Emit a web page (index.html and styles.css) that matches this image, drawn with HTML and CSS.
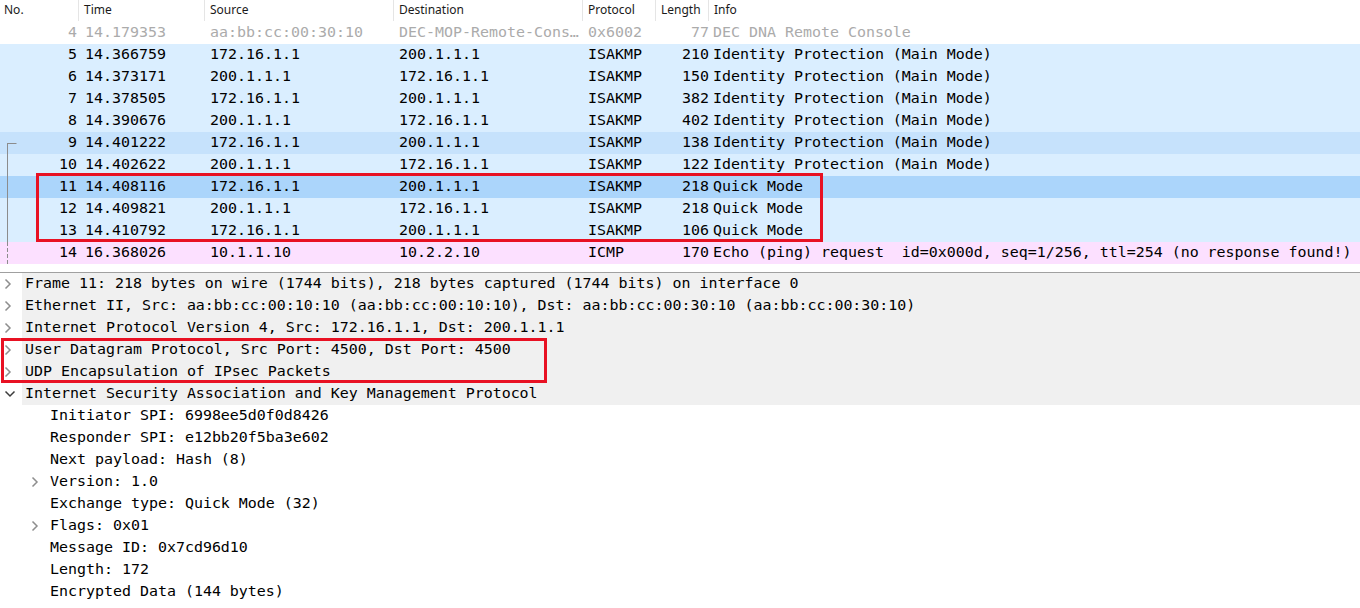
FILE: index.html
```html
<!DOCTYPE html>
<html>
<head>
<meta charset="utf-8">
<link rel="stylesheet" href="styles.css">
</head>
<body>
<div class="app">
  <section class="plist">
    <div class="row head">
      <div class="c no">No.</div>
      <div class="c">Time</div>
      <div class="c">Source</div>
      <div class="c">Destination</div>
      <div class="c">Protocol</div>
      <div class="c">Length</div>
      <div class="c last">Info</div>
    </div>
    <div class="row pk dim"><div class="c num">4</div><div class="c">14.179353</div><div class="c">aa:bb:cc:00:30:10</div><div class="c">DEC-MOP-Remote-Cons…</div><div class="c">0x6002</div><div class="c num">77</div><div class="c">DEC DNA Remote Console</div></div>
    <div class="row pk udp"><div class="c num">5</div><div class="c">14.366759</div><div class="c">172.16.1.1</div><div class="c">200.1.1.1</div><div class="c">ISAKMP</div><div class="c num">210</div><div class="c">Identity Protection (Main Mode)</div></div>
    <div class="row pk udp"><div class="c num">6</div><div class="c">14.373171</div><div class="c">200.1.1.1</div><div class="c">172.16.1.1</div><div class="c">ISAKMP</div><div class="c num">150</div><div class="c">Identity Protection (Main Mode)</div></div>
    <div class="row pk udp"><div class="c num">7</div><div class="c">14.378505</div><div class="c">172.16.1.1</div><div class="c">200.1.1.1</div><div class="c">ISAKMP</div><div class="c num">382</div><div class="c">Identity Protection (Main Mode)</div></div>
    <div class="row pk udp"><div class="c num">8</div><div class="c">14.390676</div><div class="c">200.1.1.1</div><div class="c">172.16.1.1</div><div class="c">ISAKMP</div><div class="c num">402</div><div class="c">Identity Protection (Main Mode)</div></div>
    <div class="row pk rel"><div class="c num">9</div><div class="c">14.401222</div><div class="c">172.16.1.1</div><div class="c">200.1.1.1</div><div class="c">ISAKMP</div><div class="c num">138</div><div class="c">Identity Protection (Main Mode)</div></div>
    <div class="row pk udp"><div class="c num">10</div><div class="c">14.402622</div><div class="c">200.1.1.1</div><div class="c">172.16.1.1</div><div class="c">ISAKMP</div><div class="c num">122</div><div class="c">Identity Protection (Main Mode)</div></div>
    <div class="row pk sel"><div class="c num">11</div><div class="c">14.408116</div><div class="c">172.16.1.1</div><div class="c">200.1.1.1</div><div class="c">ISAKMP</div><div class="c num">218</div><div class="c">Quick Mode</div></div>
    <div class="row pk udp"><div class="c num">12</div><div class="c">14.409821</div><div class="c">200.1.1.1</div><div class="c">172.16.1.1</div><div class="c">ISAKMP</div><div class="c num">218</div><div class="c">Quick Mode</div></div>
    <div class="row pk udp"><div class="c num">13</div><div class="c">14.410792</div><div class="c">172.16.1.1</div><div class="c">200.1.1.1</div><div class="c">ISAKMP</div><div class="c num">106</div><div class="c">Quick Mode</div></div>
    <div class="row pk icmp"><div class="c num">14</div><div class="c">16.368026</div><div class="c">10.1.1.10</div><div class="c">10.2.2.10</div><div class="c">ICMP</div><div class="c num">170</div><div class="c">Echo (ping) request  id=0x000d, seq=1/256, ttl=254 (no response found!)</div></div>
    <svg class="conv" width="12" height="124" viewBox="0 0 12 124">
      <path d="M7.5 0.5 H16.5" stroke="#8c8c8c" stroke-width="1" fill="none"/>
      <path d="M7.5 0 V99" stroke="#8c8c8c" stroke-width="1" fill="none"/>
      <path d="M7.5 99 V121" stroke="#8c8c8c" stroke-width="1" stroke-dasharray="4 2" fill="none"/>
    </svg>
    <div class="mark mark-list"></div>
  </section>
  <section class="details">
    <div class="dl top"><span class="tw"><svg width="8" height="12" viewBox="0 0 8 12"><path d="M1.5 1.5 L6 6 L1.5 10.5" stroke="#8e8e8e" stroke-width="1.5" fill="none"/></svg></span><span class="tx">Frame 11: 218 bytes on wire (1744 bits), 218 bytes captured (1744 bits) on interface 0</span></div>
    <div class="dl top"><span class="tw"><svg width="8" height="12" viewBox="0 0 8 12"><path d="M1.5 1.5 L6 6 L1.5 10.5" stroke="#8e8e8e" stroke-width="1.5" fill="none"/></svg></span><span class="tx">Ethernet II, Src: aa:bb:cc:00:10:10 (aa:bb:cc:00:10:10), Dst: aa:bb:cc:00:30:10 (aa:bb:cc:00:30:10)</span></div>
    <div class="dl top"><span class="tw"><svg width="8" height="12" viewBox="0 0 8 12"><path d="M1.5 1.5 L6 6 L1.5 10.5" stroke="#8e8e8e" stroke-width="1.5" fill="none"/></svg></span><span class="tx">Internet Protocol Version 4, Src: 172.16.1.1, Dst: 200.1.1.1</span></div>
    <div class="dl top"><span class="tw"><svg width="8" height="12" viewBox="0 0 8 12"><path d="M1.5 1.5 L6 6 L1.5 10.5" stroke="#8e8e8e" stroke-width="1.5" fill="none"/></svg></span><span class="tx">User Datagram Protocol, Src Port: 4500, Dst Port: 4500</span></div>
    <div class="dl top"><span class="tw"><svg width="8" height="12" viewBox="0 0 8 12"><path d="M1.5 1.5 L6 6 L1.5 10.5" stroke="#8e8e8e" stroke-width="1.5" fill="none"/></svg></span><span class="tx">UDP Encapsulation of IPsec Packets</span></div>
    <div class="dl top"><span class="tw"><svg width="12" height="8" viewBox="0 0 12 8"><path d="M1.5 1.5 L6 6 L10.5 1.5" stroke="#3c3c3c" stroke-width="1.5" fill="none"/></svg></span><span class="tx">Internet Security Association and Key Management Protocol</span></div>
    <div class="dl sub"><span class="tw"></span><span class="tx">Initiator SPI: 6998ee5d0f0d8426</span></div>
    <div class="dl sub"><span class="tw"></span><span class="tx">Responder SPI: e12bb20f5ba3e602</span></div>
    <div class="dl sub"><span class="tw"></span><span class="tx">Next payload: Hash (8)</span></div>
    <div class="dl sub"><span class="tw"><svg width="8" height="12" viewBox="0 0 8 12"><path d="M1.5 1.5 L6 6 L1.5 10.5" stroke="#8e8e8e" stroke-width="1.5" fill="none"/></svg></span><span class="tx">Version: 1.0</span></div>
    <div class="dl sub"><span class="tw"></span><span class="tx">Exchange type: Quick Mode (32)</span></div>
    <div class="dl sub"><span class="tw"><svg width="8" height="12" viewBox="0 0 8 12"><path d="M1.5 1.5 L6 6 L1.5 10.5" stroke="#8e8e8e" stroke-width="1.5" fill="none"/></svg></span><span class="tx">Flags: 0x01</span></div>
    <div class="dl sub"><span class="tw"></span><span class="tx">Message ID: 0x7cd96d10</span></div>
    <div class="dl sub"><span class="tw"></span><span class="tx">Length: 172</span></div>
    <div class="dl sub"><span class="tw"></span><span class="tx">Encrypted Data (144 bytes)</span></div>
    <div class="mark mark-detail"></div>
  </section>
</div>
</body>
</html>
```
FILE: styles.css
```css
html, body {
  margin: 0;
  padding: 0;
  background: #ffffff;
}
.app {
  width: 1360px;
  height: 608px;
  overflow: hidden;
  display: flex;
  flex-direction: column;
}
.plist {
  position: relative;
  height: 272px;
  background: #ffffff;
  border-bottom: 1px solid #a0a0a0;
  flex: none;
}
.row {
  display: grid;
  grid-template-columns: 79px 126px 189px 189px 73px 53px 1fr;
  height: 22px;
}
.row .c {
  white-space: pre;
  overflow: hidden;
}
.head {
  background: #ffffff;
  font-family: "Noto Sans", "Open Sans", sans-serif;
  font-size: 12px;
  line-height: 20px;
  color: #1a1a1a;
}
.head .c {
  border-right: 1px solid #e5e5e5;
  padding-left: 5px;
  height: 21px;
}
.head .c.no { padding-left: 4px; }
.head .c.last { border-right: none; padding-left: 5px; }
.pk {
  font-family: "DejaVu Sans Mono", "Liberation Mono", monospace;
  font-size: 14.95px;
  line-height: 20px;
  color: #000000;
}
.pk .c { padding-left: 5px; height: 22px; }
.pk .c:nth-child(2) { padding-left: 6px; }
.pk .c:nth-child(7) { padding-left: 4px; overflow: visible; }
.pk .c.num { padding-left: 0; padding-right: 2px; text-align: right; }
.pk .c:nth-child(6) { padding-right: 0; }
.dim { background: #ffffff; color: #ababab; }
.udp { background: #daeeff; }
.rel { background: #c6e2fc; }
.sel { background: #abd5fb; }
.icmp { background: #fce0ff; }
.conv {
  position: absolute;
  left: 0;
  top: 143px;
  overflow: visible;
}
.mark {
  position: absolute;
  border: 3px solid #e81123;
  box-sizing: border-box;
  pointer-events: none;
}
.mark-list {
  left: 36px;
  top: 173px;
  width: 787px;
  height: 69px;
}
.details {
  position: relative;
  flex: 1;
  background: #ffffff;
}
.dl {
  display: flex;
  height: 22px;
  font-family: "DejaVu Sans Mono", "Liberation Mono", monospace;
  font-size: 14.95px;
  line-height: 20px;
  color: #000000;
  white-space: pre;
}
.dl .tw {
  display: flex;
  align-items: center;
  justify-content: center;
  flex: none;
}
.dl.top .tw {
  width: 22px;
  background: #ffffff;
  justify-content: flex-start;
  padding-left: 4px;
  box-sizing: border-box;
}
.dl.top .tx {
  flex: 1;
  background: #f0f0f0;
  padding-left: 3px;
}
.dl.sub .tw {
  width: 50px;
  justify-content: flex-end;
  padding-right: 11px;
  box-sizing: border-box;
}
.mark-detail {
  left: 1px;
  top: 65px;
  width: 546px;
  height: 45px;
}
```
